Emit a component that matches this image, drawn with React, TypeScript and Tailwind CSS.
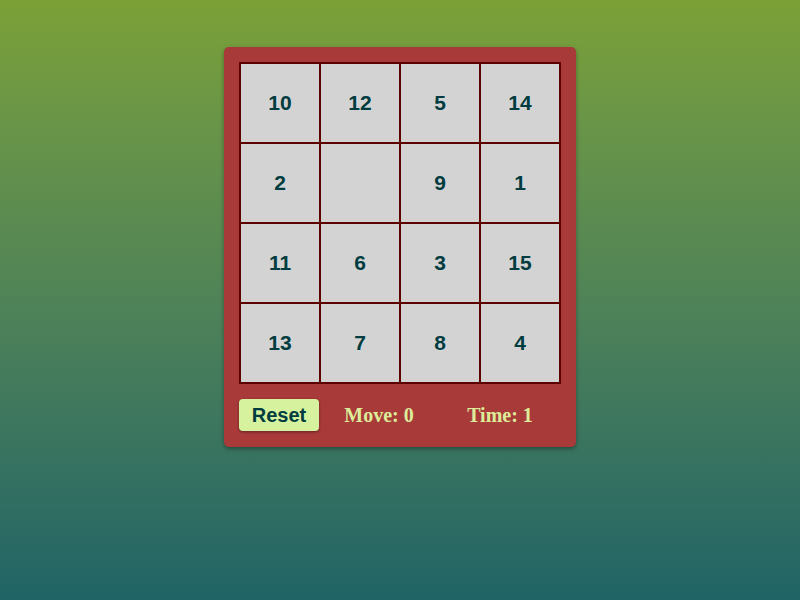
import React from "react";

const tiles = [10, 12, 5, 14, 2, 0, 9, 1, 11, 6, 3, 15, 13, 7, 8, 4];

export default function App() {
  return (
    <div className="min-h-screen w-full bg-gradient-to-b from-[#7ba136] to-[#206466] flex justify-center pt-[47px]">
      <div className="h-fit rounded-[5px] bg-[#a83a3a] p-[15px] pb-[16px] shadow-[0_2px_4px_rgba(0,0,0,0.35)]">
        <div className="grid grid-cols-[repeat(4,80px)] border border-[#5c0000]">
          {tiles.map((n, i) => (
            <div
              key={i}
              className="box-border flex h-[80px] w-[80px] items-center justify-center border border-[#5c0000] bg-[#d3d3d3] font-['Liberation_Sans',Arial,sans-serif] text-[21px] font-bold text-[#003c40]"
            >
              {n === 0 ? "" : n}
            </div>
          ))}
        </div>
        <div className="mt-[15px] flex items-center">
          <button className="h-[32px] w-[80px] rounded-[4px] bg-[#d6f29e] font-['Liberation_Sans',Arial,sans-serif] text-[20px] font-bold text-[#003c40] shadow-[0_1px_3px_rgba(0,0,0,0.4)]">
            Reset
          </button>
          <span className="w-[120px] text-center font-['Liberation_Serif','Times_New_Roman',serif] text-[20px] font-bold text-[#dcec98]">
            Move: 0
          </span>
          <span className="w-[122px] text-center font-['Liberation_Serif','Times_New_Roman',serif] text-[20px] font-bold text-[#dcec98]">
            Time: 1
          </span>
        </div>
      </div>
    </div>
  );
}
